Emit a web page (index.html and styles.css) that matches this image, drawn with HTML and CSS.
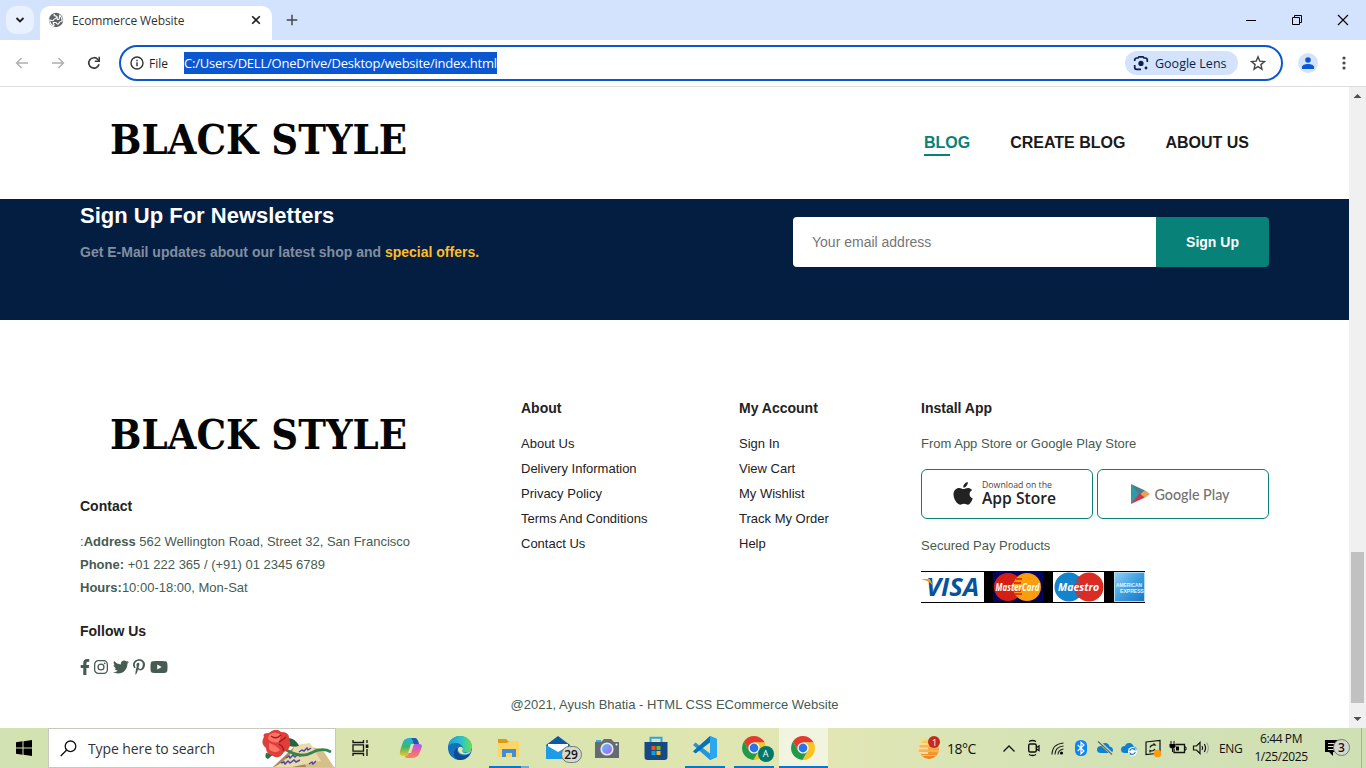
FILE: index.html
```html
<!DOCTYPE html>
<html lang="en">
<head>
<meta charset="utf-8">
<title>Ecommerce Website</title>
<link rel="stylesheet" href="styles.css">
</head>
<body>
<svg class="defs" width="0" height="0">
  <defs>
    <linearGradient id="edgeA" x1="0" y1="0" x2="1" y2="0"><stop offset="0" stop-color="#1b9de2"/><stop offset=".55" stop-color="#2bc3c8"/><stop offset="1" stop-color="#6be04f"/></linearGradient>
    <linearGradient id="copA" x1="0" y1="0" x2="0" y2="1"><stop offset="0" stop-color="#18b6e8"/><stop offset=".5" stop-color="#3fb56a"/><stop offset="1" stop-color="#f4c626"/></linearGradient>
    <linearGradient id="copB" x1="0" y1="0" x2="0" y2="1"><stop offset="0" stop-color="#a45cf0"/><stop offset=".5" stop-color="#f0609a"/><stop offset="1" stop-color="#f98a50"/></linearGradient>
    <linearGradient id="amex" x1="0" y1="0" x2="1" y2="1"><stop offset="0" stop-color="#8fd0f4"/><stop offset=".5" stop-color="#3d9ee0"/><stop offset="1" stop-color="#1a78c4"/></linearGradient>
    <linearGradient id="sun" x1="0" y1="0" x2="0" y2="1"><stop offset="0" stop-color="#ffd66b"/><stop offset="1" stop-color="#f07d14"/></linearGradient>
    <linearGradient id="lens" x1="0" y1="0" x2="1" y2="1"><stop offset="0" stop-color="#56c7f5"/><stop offset="1" stop-color="#b45af2"/></linearGradient>
    <g id="chrome">
      <path fill="#e33b2e" d="M12 6.5H22.66A12 12 0 0 0 1.9 5.52L7.24 14.75L12 12Z"/>
      <path fill="#fcc31e" d="M12 6.5H22.66A12 12 0 0 0 1.9 5.52L7.24 14.75L12 12Z" transform="rotate(120 12 12)"/>
      <path fill="#229a48" d="M12 6.5H22.66A12 12 0 0 0 1.9 5.52L7.24 14.75L12 12Z" transform="rotate(240 12 12)"/>
      <circle cx="12" cy="12" r="5.6" fill="#fff"/><circle cx="12" cy="12" r="4.4" fill="#2a74e8"/>
    </g>
  </defs>
</svg>

<div class="screen">
  <div class="tabstrip">
    <div class="tab-search"><svg width="10" height="10" viewBox="0 0 10 10"><path d="M1.5 3l3.5 3.5L8.500 3" fill="none" stroke="#1f1f1f" stroke-width="1.8"/></svg></div>
    <div class="tab">
      <svg width="16" height="16" viewBox="0 0 16 16"><circle cx="8" cy="8" r="7.200" fill="#5f6368"/><path d="M6.500 1.800C5 3.500 7 4 8.500 4.200C10 5 8 6.500 6.500 7C5 7.200 6 8.500 4.800 8.700L1.700 8C1.600 11 3.500 13 5.800 13.900C6.800 12 4.800 11.500 5.200 10.500H7.500C9 10.500 8.600 12 10 12.200C11.300 12 11 9.500 12.800 9.500L14.200 9C14.500 6 13 4.500 11.800 3.200C11 5 12 6.500 10.800 7.400C9 7.600 8.500 7.200 9.800 5.500" fill="none" stroke="#fff" stroke-width="1.100"/></svg>
      <span class="tab-title">Ecommerce Website</span>
      <svg class="tab-x" width="10" height="10" viewBox="0 0 10 10"><path d="M1.200 1.200l7.600 7.600M8.800 1.200l-7.600 7.600" stroke="#1f1f1f" stroke-width="1.600"/></svg>
    </div>
    <svg class="newtab" width="12" height="12" viewBox="0 0 12 12"><path d="M6 .7v10.600M.7 6h10.600" stroke="#474747" stroke-width="1.500"/></svg>
    <div class="win-controls">
      <svg width="46" height="40"><path d="M18 20.500h10" stroke="#000"/></svg>
      <svg width="46" height="40"><path d="M18.500 17.500h7v7h-7zM20.500 17.500v-2h7v7h-2" fill="none" stroke="#000"/></svg>
      <svg width="46" height="40"><path d="M18 15l10 10M28 15l-10 10" stroke="#000" stroke-width="1.100"/></svg>
    </div>
  </div>

  <div class="toolbar">
    <div class="nav-icons">
      <svg width="14" height="12" viewBox="0 0 14 12"><path d="M13 6H1.800M6.600 1L1.600 6l5 5" fill="none" stroke="#b0b0b0" stroke-width="1.500"/></svg>
      <svg width="14" height="12" viewBox="0 0 14 12"><path d="M1 6h11.200M7.400 1l5 5-5 5" fill="none" stroke="#b0b0b0" stroke-width="1.500"/></svg>
      <svg width="14" height="14" viewBox="0 0 14 14"><path d="M12 8.300A5.200 5.200 0 1 1 10.900 3.500L12.300 5" fill="none" stroke="#3c3c3c" stroke-width="1.700"/><path d="M13 .8V6H7.800V4.500h3.700V.8z" fill="#3c3c3c"/></svg>
    </div>
    <div class="omnibox">
      <svg width="14" height="14" viewBox="0 0 14 14"><circle cx="7" cy="7" r="6" fill="none" stroke="#333" stroke-width="1.400"/><path d="M7 6.200v4M7 3.700v1.500" stroke="#333" stroke-width="1.400"/></svg>
      <span class="file-label">File</span>
      <span class="url">C:/Users/DELL/OneDrive/Desktop/website/index.html</span>
      <div class="lens-chip">
        <svg width="16" height="16" viewBox="0 0 16 16"><path d="M1.700 6V5A2 2 0 0 1 3.700 3H5L6 1.800H10L11 3h1.300a2 2 0 0 1 2 2V7M1.700 10v2.300a2 2 0 0 0 2 2H8" fill="none" stroke="#0b1f4a" stroke-width="1.700"/><circle cx="8" cy="8.400" r="2.600" fill="#0b1f4a"/><circle cx="13" cy="13" r="1.400" fill="#0b1f4a"/></svg>
        <span>Google Lens</span>
      </div>
      <svg class="star" width="16" height="16" viewBox="0 0 16 16"><path d="M8 1.800l1.800 4.300 4.700.4-3.600 3.100 1.100 4.600L8 11.700l-4 2.500 1.100-4.600L1.500 6.500l4.700-.4z" fill="none" stroke="#474747" stroke-width="1.400"/></svg>
    </div>
    <div class="avatar"><svg width="12" height="12" viewBox="0 0 12 12"><circle cx="6" cy="3" r="2.800" fill="#0b57d0"/><path d="M0 12V10C0 8 3 7 6 7s6 1 6 3v2z" fill="#0b57d0"/></svg></div>
    <svg class="menu-dots" width="4" height="16"><circle cx="2" cy="3" r="1.600" fill="#474747"/><circle cx="2" cy="8" r="1.600" fill="#474747"/><circle cx="2" cy="13" r="1.600" fill="#474747"/></svg>
  </div>

  <div class="viewport">
    <div class="page">
      <header class="site-header">
        <svg class="logo" width="357" height="60"><text x="30" y="43" textLength="297" lengthAdjust="spacingAndGlyphs">BLACK STYLE</text></svg>
        <nav class="site-nav"><a class="active">BLOG</a><a>CREATE BLOG</a><a>ABOUT US</a></nav>
      </header>
      <section class="newsletter">
        <div>
          <h4>Sign Up For Newsletters</h4>
          <p>Get E-Mail updates about our latest shop and <span>special offers.</span></p>
        </div>
        <div class="form"><div class="email">Your email address</div><div class="signup">Sign Up</div></div>
      </section>
      <footer class="footer">
        <div class="col col-contact">
          <svg class="logo" width="357" height="78"><text x="30" y="53" textLength="297" lengthAdjust="spacingAndGlyphs">BLACK STYLE</text></svg>
          <h4 class="contact-h">Contact</h4>
          <div class="lines">
            <p>:<b>Address</b> 562 Wellington Road, Street 32, San Francisco</p>
            <p><b>Phone:</b> +01 222 365 / (+91) 01 2345 6789</p>
            <p><b>Hours:</b>10:00-18:00, Mon-Sat</p>
          </div>
          <h4 class="follow-h">Follow Us</h4>
          <div class="social">
            <svg width="10" height="16" viewBox="0 0 320 512"><path d="M279.140 288l14.220-92.660h-88.910v-60.130c0-25.350 12.420-50.060 52.240-50.060h40.420V6.260S260.430 0 225.360 0c-73.220 0-121.080 44.380-121.080 124.720v70.620H22.890V288h81.390v224h100.170V288z"/></svg>
            <svg width="14" height="16" viewBox="0 0 14 16"><rect x=".65" y="1.650" width="12.700" height="12.700" rx="3.600" fill="none" stroke="#465b52" stroke-width="1.300"/><circle cx="7" cy="8" r="2.950" fill="none" stroke="#465b52" stroke-width="1.300"/><circle cx="10.700" cy="4.300" r=".85"/></svg>
            <svg width="16" height="16" viewBox="0 0 512 512"><path d="M459.370 151.716c.325 4.548.325 9.097.325 13.645 0 138.720-105.583 298.558-298.558 298.558-59.452 0-114.680-17.219-161.137-47.106 8.447.974 16.568 1.299 25.340 1.299 49.055 0 94.213-16.568 130.274-44.832-46.132-.975-84.792-31.188-98.112-72.772 6.498.974 12.995 1.624 19.818 1.624 9.421 0 18.843-1.300 27.614-3.573-48.081-9.747-84.143-51.980-84.143-102.985v-1.299c13.969 7.797 30.214 12.670 47.431 13.319-28.264-18.843-46.781-51.005-46.781-87.391 0-19.492 5.197-37.360 14.294-52.954 51.655 63.675 129.300 105.258 216.365 109.807-1.624-7.797-2.599-15.918-2.599-24.040 0-57.828 46.782-104.934 104.934-104.934 30.213 0 57.502 12.670 76.670 33.137 23.715-4.548 46.456-13.320 66.599-25.340-7.798 24.366-24.366 44.833-46.132 57.827 21.117-2.273 41.584-8.122 60.426-16.243-14.292 20.791-32.161 39.308-52.628 54.253z"/></svg>
            <svg width="12" height="16" viewBox="0 0 384 512"><path d="M204 6.500C101.400 6.500 0 74.900 0 185.600 0 256 39.600 296 63.600 296c9.900 0 15.600-27.600 15.600-35.400 0-9.300-23.700-29.100-23.700-67.800 0-80.400 61.200-137.400 140.400-137.400 68.100 0 118.500 38.700 118.500 109.800 0 53.100-21.300 152.700-90.300 152.700-24.900 0-46.200-18-46.200-43.800 0-37.800 26.400-74.400 26.400-113.400 0-66.200-93.900-54.200-93.900 25.800 0 16.800 2.100 35.400 9.600 50.700-13.800 59.400-42 147.900-42 209.100 0 18.900 2.700 37.500 4.500 56.400 3.400 3.800 1.700 3.400 6.900 1.500 50.400-69 48.600-82.500 71.400-172.800 12.300 23.400 44.100 36 69.300 36 106.200 0 153.900-103.500 153.900-196.800C384 71.300 298.200 6.500 204 6.500z"/></svg>
            <svg width="18" height="16" viewBox="0 0 576 512"><path d="M549.655 124.083c-6.281-23.650-24.787-42.276-48.284-48.597C458.781 64 288 64 288 64S117.220 64 74.629 75.486c-23.497 6.322-42.003 24.947-48.284 48.597-11.412 42.867-11.412 132.305-11.412 132.305s0 89.438 11.412 132.305c6.281 23.650 24.787 41.500 48.284 47.821C117.220 448 288 448 288 448s170.780 0 213.371-11.486c23.497-6.321 42.003-24.171 48.284-47.821 11.412-42.867 11.412-132.305 11.412-132.305s0-89.438-11.412-132.305zm-317.510 213.508V175.185l142.739 81.205-142.739 81.201z"/></svg>
          </div>
        </div>
        <div class="col col-about">
          <h4>About</h4>
          <div class="links"><a>About Us</a><a>Delivery Information</a><a>Privacy Policy</a><a>Terms And Conditions</a><a>Contact Us</a></div>
        </div>
        <div class="col col-account">
          <h4>My Account</h4>
          <div class="links"><a>Sign In</a><a>View Cart</a><a>My Wishlist</a><a>Track My Order</a><a>Help</a></div>
        </div>
        <div class="col col-install">
          <h4>Install App</h4>
          <p class="row-text">From App Store or Google Play Store</p>
          <div class="stores">
            <div class="store"><svg width="170" height="48" viewBox="0 0 170 48">
              <path transform="translate(31.500 12)" d="M14.300 0C14.500 1.600 13.700 3 12.900 3.900C12 5 10.900 5.500 9.800 5.400C9.600 3.900 10.400 2.500 11.200 1.700C12.100.7 13.300.1 14.300 0ZM18.500 8.200C16.900 9.100 16 10.500 16.100 12.300C16.200 14.300 17.300 15.800 19.200 16.600C18.400 18.900 16.600 22.500 14.500 22.700C13 22.700 12.400 21.800 10.500 21.800C8.700 21.800 8 22.700 6.600 22.700C3.400 22.500 0 16.600 0 12.500C0 8.300 2.800 6 5.600 6C7.500 6 8.900 7.100 10 7.100C11.100 7.100 12.800 5.900 14.900 6C16.400 6.100 17.700 6.900 18.500 8.200Z" fill="#222"/>
              <text class="st-small" x="60" y="18" textLength="70" lengthAdjust="spacingAndGlyphs">Download on the</text>
              <text class="st-big" x="60" y="34" textLength="74" lengthAdjust="spacingAndGlyphs">App Store</text></svg></div>
            <div class="store"><svg width="170" height="48" viewBox="0 0 170 48">
              <path d="M33 14L44 24L33 34Z" fill="#319aa8"/><path d="M33 14L47 20.500L42 25.500Z" fill="#467f91"/><path d="M33 34L47 27.500L42 22.500Z" fill="#c9394e"/><path d="M47 20.300L52 24L47 27.700L42.500 24Z" fill="#e6a25b"/>
              <text class="st-google" x="56.500" y="30" textLength="75" lengthAdjust="spacingAndGlyphs">Google Play</text></svg></div>
          </div>
          <p class="row-text">Secured Pay Products</p>
          <svg class="pay" width="224" height="32" viewBox="0 0 224 32">
            <rect width="224" height="32" fill="#000"/>
            <rect y="1" width="63" height="30" fill="#fff"/>
            <text class="visa" x="5" y="25" textLength="53" lengthAdjust="spacingAndGlyphs">VISA</text><path d="M1 8h8l3 7C9 11 5 9 1 8.500z" fill="#f0a020"/>
            <rect x="72" y="1" width="50" height="30" fill="#03045c"/>
            <circle cx="87" cy="16" r="14" fill="#d61f14"/><circle cx="106" cy="16" r="14" fill="#fb9d0c"/>
            <path d="M95 8h6M93 12h7M93 20h7M94 23h7" stroke="#d61f14" stroke-width="1.300"/>
            <text class="card" x="74.500" y="20" textLength="44" lengthAdjust="spacingAndGlyphs">MasterCard</text>
            <rect x="132" y="1" width="51" height="30" fill="#fff"/>
            <circle cx="148" cy="16" r="14.500" fill="#1384cc"/><circle cx="168" cy="16" r="14.500" fill="#da2b24"/><path d="M158 5.500a14.500 14.500 0 0 0 0 21" fill="#da2b24"/><path d="M155 9h4M154 12h5M154 20h5M155 23h5" stroke="#1384cc" stroke-width="1.200"/>
            <text class="card" x="137" y="19.500" textLength="41" lengthAdjust="spacingAndGlyphs">Maestro</text>
            <rect x="193" y="1" width="31" height="30" fill="#b5ddf5"/><rect x="194" y="2" width="29" height="28" fill="url(#amex)"/>
            <text class="amex" x="195" y="16" textLength="26" lengthAdjust="spacingAndGlyphs">AMERICAN</text><text class="amex" x="199" y="22" textLength="24" lengthAdjust="spacingAndGlyphs">EXPRESS</text>
          </svg>
        </div>
      </footer>
      <p class="copyright">@2021, Ayush Bhatia - HTML CSS ECommerce Website</p>
    </div>
    <div class="scrollbar">
      <svg width="17" height="17"><path d="M4.500 11h8L8.500 7z" fill="#505050"/></svg>
      <div class="thumb"></div>
      <svg width="17" height="17"><path d="M4.500 6h8L8.500 10z" fill="#505050"/></svg>
    </div>
  </div>

  <div class="taskbar">
    <div class="start"><svg width="16" height="16" viewBox="0 0 16 16"><path d="M0 2.200L6.500 1.300V7.500H0zM7.500 1.200L16 0V7.500H7.500zM0 8.500H6.500V14.700L0 13.800zM7.500 8.500H16V16L7.500 14.800z"/></svg></div>
    <div class="search">
      <svg width="17" height="17" viewBox="0 0 17 17"><circle cx="10.500" cy="6.300" r="5.300" fill="none" stroke="#111" stroke-width="1.300"/><path d="M6.700 10L.7 16" stroke="#111" stroke-width="1.300"/></svg>
      <span>Type here to search</span>
      <svg class="rose" width="74" height="37" viewBox="0 0 74 37">
        <path d="M12 37L36 14L52 22L72 37Z" fill="#a98a5e"/><path d="M38 15L61 19L73 37H45Z" fill="#d5c08c"/><path d="M34 15L49 13L60 31L31 37H13Q29 29 34 15Z" fill="#eadbad"/>
        <path d="M25 28l3-2 1 2 3-3 2 2 3-3 2 2 3-2M20 33l3-1 1 2 3-3 2 2 4-3 2 2 4-2M38 22l3-2 2 1 3-3 1 2 3-2M48 34l3-2 1 2 3-3" fill="none" stroke="#5146a0" stroke-width="1.500"/>
        <path d="M22 18Q39 29 50 23T70 22" fill="none" stroke="#34854a" stroke-width="2.700"/><path d="M25 8Q34 7 38 16Q29 18 24 14Z" fill="#27643e"/><path d="M5 23l8 1-6 5Q3 28 5 23z" fill="#26734a"/>
        <path d="M3 7Q1 3 8 3Q15-3 20 2Q29 2 28 9Q32 18 23 22Q18 30 12 26Q5 24 5 18Q-1 13 3 7Z" fill="#df3f3b"/><path d="M8 5Q14 0 20 5L18 12Q12 14 7 9ZM8 13Q15 15 19 20Q13 25 8 19Z" fill="#ff7469"/><path d="M10 6Q15 10 20 5M18 12Q22 10 25 7M18 14Q24 18 22 21" fill="none" stroke="#a91825" stroke-width="1.500"/>
      </svg>
    </div>
    <div class="taskview"><svg width="17" height="16" viewBox="0 0 17 16"><path d="M1 0v2.500h10.500V0M1 16v-2.500h10.500V16M1 4.800h10.500v6.400H1zM15 0v3M15 9v7" fill="none" stroke="#111" stroke-width="1.300"/><rect x="13.700" y="4.500" width="2.700" height="3.500" fill="#111"/></svg></div>
    <div class="apps">
      <div class="app"><svg width="24" height="24" viewBox="0 0 24 24"><path d="M7 3Q8 2 10 2H16Q18 2 19 5L20 8H15Q13 8 12 11L10 17Q9 20 6 20H4Q0 20 1 15L4 6Q5 3 7 3Z" fill="url(#copA)"/><path d="M12 2h4q2 0 3 3l1 3h-4q-2 0-2-3z" fill="#2454b8"/><path d="M17 21Q16 22 14 22H8Q6 22 6 20Q9 20 10 17L13 10Q14 8 16 8H20Q24 8 22.500 12L20 18Q19 21 17 21Z" fill="url(#copB)"/><path d="M12 8h3l-3 9H9z" fill="#dce6ae"/></svg></div>
      <div class="app"><svg width="24" height="24" viewBox="0 0 24 24"><circle cx="12" cy="12" r="12" fill="#1470bd"/><path d="M.3 10C1 3 7 0 12 0C19 0 24 5 24 10.500C24 15 20 17 16.500 16.500C13.500 16 14.500 14.500 15 12.500C15 9 11 7 7.500 7Q2.500 7 .3 10Z" fill="url(#edgeA)"/><path d="M9.500 12C7.500 19 15 22 22.300 17.500C20 22 16 24 11.500 24C4 23 5 13 9.500 12Z" fill="#0d4a94"/><path d="M11 11Q14.500 10 15 13Q13 16 16.500 17Q20 18 23.500 14Q22 18 18 18.500Q11 19 9.800 14Q9.800 12 11 11Z" fill="#dce6ae"/></svg></div>
      <div class="app open2"><svg width="24" height="24" viewBox="0 0 24 24"><path d="M1 3h8l2 2h11v5H1z" fill="#d99a16"/><path d="M1 7h9l2-2h10v16H1z" fill="#ffd466"/><path d="M5 13h14v8h-4v-4H9v4H5z" fill="#3e8fd6"/></svg></div>
      <div class="app"><svg width="24" height="24" viewBox="0 0 24 24"><path d="M0 9L12 0L24 9V23H0z" fill="#0c5aa6"/><path d="M2 8h20v8H2z" fill="#fff"/><path d="M0 9l12 7 12-7v14H0z" fill="#1e9be6"/></svg><span class="badge">29</span></div>
      <div class="app"><svg width="24" height="24" viewBox="0 0 24 24"><rect x="1" y="4" width="5" height="3" fill="#34aee8"/><path d="M0 6h6l3-3h7l3 3h5v16H0z" fill="#656b73"/><circle cx="12" cy="13" r="6.600" fill="#e5e8ee"/><circle cx="12" cy="13" r="5" fill="url(#lens)"/><circle cx="21.500" cy="8.500" r="1" fill="#fff"/></svg></div>
      <div class="app"><svg width="24" height="24" viewBox="0 0 24 24"><path d="M6.500 7V1.700H17.500V7" fill="none" stroke="#2aa7e8" stroke-width="2"/><path d="M.5 6H23.500V21Q23.500 24 20.500 24H3.500Q.5 24 .5 21z" fill="#174a84"/><path d="M7.500 10h4v4h-4z" fill="#f25022"/><path d="M12.500 10h4v4h-4z" fill="#7fba00"/><path d="M7.500 15h4v4h-4z" fill="#00a4ef"/><path d="M12.500 15h4v4h-4z" fill="#ffb900"/></svg></div>
      <div class="app open"><svg width="24" height="24" viewBox="0 0 24 24"><path d="M17 0L24 3V21L17 24L0 9L2.500 6.500L17 17.500Z" fill="#2196dd"/><path d="M17 0V6.500L2.500 17.500L0 15.200Z" fill="#0871b8"/><path d="M17 0L24 3V21L17 24Z" fill="#2aa7ee"/></svg></div>
      <div class="app open"><svg width="24" height="24" viewBox="0 0 24 24"><use href="#chrome"/></svg><span class="profile">A</span></div>
      <div class="app active"><svg width="24" height="24" viewBox="0 0 24 24"><use href="#chrome"/></svg></div>
    </div>
    <div class="weather">
      <svg width="24" height="24" viewBox="0 0 24 24"><path d="M4 5h11M2 9h12" stroke="#ffd879" stroke-width="2"/><circle cx="13" cy="13" r="10" fill="url(#sun)"/><path d="M2 8h12M0 12.500h12M3 17h9" stroke="#f9dda0" stroke-width="1.800"/><path d="M2 15h20M5 19.500h15" stroke="#fbc178" stroke-width="1.200"/><circle cx="18" cy="6" r="6" fill="#c42b1c"/><text class="wbadge" x="16" y="9.500">1</text></svg>
      <span>18°C</span>
    </div>
    <div class="tray">
      <svg width="24" height="24"><path d="M6.500 15.500L12 10l5.500 5.500" fill="none" stroke="#111" stroke-width="1.300"/></svg>
      <svg width="24" height="24"><rect x="7.700" y="8" width="7.600" height="8" rx="1.500" fill="none" stroke="#111" stroke-width="1.400"/><path d="M15.500 11.500l2.500-1.500v4.500l-2.500-1.500M8 5.500Q11.500 3.500 15 5.500M8 18.500q3.500 2 7 0" fill="none" stroke="#111" stroke-width="1.300"/></svg>
      <svg width="24" height="24"><g fill="none" stroke="#222" stroke-width="1.100"><path d="M7 18.500Q7 8 18.500 7M10 18.500Q10 11 18.500 10M13 18.500Q13 14 18.500 13"/></g><circle cx="16.500" cy="17" r="1.600"/></svg>
      <svg width="24" height="24"><rect x="6" y="4" width="12" height="16" rx="5.500" fill="#0a84ff"/><path d="M8.700 9l6.300 6-3 2.800V6.200L15 9l-6.300 6" fill="none" stroke="#fff" stroke-width="1.200"/></svg>
      <svg width="24" height="24"><path d="M8 17Q4 17 4 13.500T8 10Q9 6.500 13 7q3 .5 3.500 3.500Q20 11 20 14q0 3-3 3z" fill="#0f80d4"/><path d="M6 6l13 12" stroke="#dce6ae" stroke-width="3"/><path d="M5 5.500l14 13" stroke="#666" stroke-width="1.200"/></svg>
      <svg width="24" height="24"><path d="M8 17Q4 17 4 13.500T8 10Q9 6.500 13 7q3 .5 3.500 3.500Q20 11 20 14q0 3-3 3z" fill="#0f80d4"/><circle cx="15.500" cy="15.500" r="4.500" fill="#fff"/><path d="M12.800 15a2.800 2.800 0 0 1 5-1.300v-1.500M18.200 16a2.800 2.800 0 0 1-5 1.300v1.500" fill="none" stroke="#1472c4" stroke-width="1.100"/></svg>
      <svg width="24" height="24"><path d="M5 6l14-1.500V17L5 18.500z" fill="none" stroke="#111" stroke-width="1.200"/><path d="M9 11.500q1-3 5-2.500l-1.500-1.500M14 13q-2 3-5 1.500v2" fill="none" stroke="#111" stroke-width="1.200"/><circle cx="16.500" cy="17.500" r="3.800" fill="#ff9b0b"/></svg>
      <svg width="24" height="24"><path d="M10.500 8.500h9v8H9v-4" fill="none" stroke="#111" stroke-width="1.300"/><path d="M19.500 11h1.500v3h-1.500M6 5v3M9 5v3" fill="none" stroke="#111"/><path d="M4.500 8h6v3q-3 3-6 0zM11 10.500h3v4h-3z"/><path d="M7.500 12v4" stroke="#111"/></svg>
      <svg width="24" height="24"><path d="M4.500 10h3l3.500-3.500v11L7.500 14h-3z" fill="none" stroke="#111" stroke-width="1.200"/><path d="M13 10q1.300 2 0 4M15.300 8q2.500 4 0 8" fill="none" stroke="#111" stroke-width="1.200"/><path d="M17.600 6.500q3.500 5.500 0 11" fill="none" stroke="#999"/></svg>
    </div>
    <span class="lang">ENG</span>
    <div class="clock"><span>6:44 PM</span><span>1/25/2025</span></div>
    <div class="notif"><svg width="16" height="16" viewBox="0 0 16 16"><path d="M0 0h16v12h-8v4l-4-4H0z"/><path d="M3 3.500h10M3 6.500h10M3 9.500h6" stroke="#dce6be"/></svg><span class="badge">3</span></div>
    <div class="show-desktop"></div>
  </div>
</div>
</body>
</html>
```

FILE: styles.css
```css
* { box-sizing: border-box; margin: 0; padding: 0; }
body { width: 1366px; height: 768px; overflow: hidden; background: #fff; font-family: "Liberation Sans", Arial, sans-serif; }
svg { display: block; flex: none; }
.defs { position: absolute; }
.screen { display: flex; flex-direction: column; width: 1366px; height: 768px; }

/* browser chrome */
.tabstrip { display: flex; align-items: center; height: 40px; background: #d3e3fd; font-family: "Open Sans", sans-serif; }
.tab-search { display: flex; align-items: center; justify-content: center; width: 28px; height: 28px; margin-left: 6px; border-radius: 10px; background: #e9f1fe; }
.tab { display: flex; align-items: center; align-self: flex-end; width: 232px; height: 34px; margin-left: 6px; padding: 0 11px 6px 8px; border-radius: 10px 10px 0 0; background: #fff; }
.tab-title { margin-left: 8px; font-size: 12px; letter-spacing: -0.1px; color: #333; white-space: nowrap; }
.tab-x { margin-left: auto; }
.newtab { margin-left: 14px; }
.win-controls { display: flex; margin-left: auto; }
.toolbar { display: flex; align-items: center; height: 47px; padding-top: 0; border-bottom: 1px solid #dedede; background: #fff; font-family: "Open Sans", sans-serif; }
.nav-icons { display: flex; align-items: center; gap: 22px; width: 119px; padding-left: 15px; }
.omnibox { display: flex; align-items: center; width: 1164px; height: 36px; padding: 0 16px 0 9px; border: 2px solid #0b57d0; border-radius: 18px; }
.file-label { width: 35px; margin-left: 5px; font-size: 12px; color: #1f1f1f; }
.url { height: 22px; line-height: 22px; background: #0b57d0; color: #fff; font-size: 13px; letter-spacing: -0.22px; white-space: nowrap; }
.lens-chip { display: flex; align-items: center; gap: 6px; width: 113px; height: 24px; margin-left: auto; padding-left: 8px; border-radius: 12px; background: #d3e3fd; color: #0b1f4a; font-size: 12.5px; white-space: nowrap; }
.star { margin-left: 12px; margin-right: -1px; }
.avatar { display: flex; align-items: center; justify-content: center; width: 20px; height: 20px; margin-left: 15px; border-radius: 50%; background: #d3e3fd; }
.menu-dots { margin-left: 24px; }

/* page */
.viewport { display: flex; height: 641px; }
.page { width: 1349px; height: 641px; background: #fff; }
.logo text { font-family: "DejaVu Serif Condensed", "DejaVu Serif", serif; font-weight: bold; font-size: 41px; fill: #050505; }
.site-header { display: flex; align-items: center; justify-content: space-between; height: 112px; padding: 0 100px 0 80px; }
.site-header .logo { margin-bottom: 4px; }
.site-nav { display: flex; gap: 40px; }
.site-nav a { display: block; padding-bottom: 3px; margin-top: 3px; font-size: 16px; line-height: 20px; font-weight: bold; color: #1a1a1a; white-space: nowrap; }
.site-nav .active { color: #088178; }
.site-nav .active::after { content: ""; display: block; width: 26px; height: 2px; margin-top: 1px; margin-bottom: -3px; background: #088178; }
.newsletter { display: flex; justify-content: space-between; height: 121px; padding: 0 80px; background: #041e42; }
.newsletter h4 { height: 33px; line-height: 33px; font-size: 22px; color: #fff; white-space: nowrap; }
.newsletter p { margin-top: 8px; font-size: 14px; line-height: 25px; font-weight: bold; color: #818ea0; white-space: nowrap; }
.newsletter p span { color: #ffbd27; }
.form { display: flex; width: 476px; height: 50px; margin-top: 18px; border-radius: 4px; overflow: hidden; font-size: 14px; line-height: 50px; }
.email { width: 363px; padding-left: 19px; background: #fff; color: #757575; }
.signup { flex: 1; background: #088178; color: #fff; font-weight: bold; text-align: center; }
.footer { display: flex; height: 372px; padding: 76px 80px 0; font-size: 13px; color: #465b52; }
.footer h4 { font-size: 14px; line-height: 24px; color: #222; white-space: nowrap; }
.footer p { white-space: nowrap; }
.col-contact { width: 441px; }
.contact-h, .follow-h { margin-top: 20px; }
.lines { margin-top: 12px; line-height: 23px; }
.social { display: flex; gap: 4.400px; margin-top: 16px; fill: #465b52; }
.col-about { width: 218px; }
.col-account { width: 182px; }
.links { display: flex; flex-direction: column; margin-top: 11px; }
.links a { line-height: 25px; color: #222; }
.row-text { margin-top: 11px; line-height: 25px; }
.stores { display: flex; gap: 4px; margin-top: 13px; }
.store { width: 172px; height: 50px; border: 1px solid #088178; border-radius: 6px; }
.stores + .row-text { margin-top: 14px; }
.pay { margin-top: 13px; }
.st-small { font: 9px "Open Sans", sans-serif; fill: #444; }
.st-big { font: 600 16px "Open Sans", sans-serif; fill: #222; }
.st-google { font: 500 16px Lato, sans-serif; fill: #737373; }
.visa { font: italic bold 25px "Open Sans", sans-serif; fill: #07529c; }
.card { font: italic bold 11px "Open Sans", sans-serif; fill: #fff; }
.amex { font: bold 6px "Liberation Sans", sans-serif; fill: #e4f4ff; }
.copyright { font-size: 13px; line-height: 25px; text-align: center; color: #465b52; }
.scrollbar { display: flex; flex-direction: column; width: 17px; height: 641px; background: #f0f0f0; }
.thumb { width: 13px; height: 151px; margin: 448px 2px 8px; background: #c1c1c1; }

/* taskbar */
.taskbar { display: flex; align-items: center; height: 40px; background: linear-gradient(90deg, #d3e2b2, #dce5ae 45%, #e2e6b4 60%, #d5e3b6 75%, #cfe0b4); font-family: "Open Sans", sans-serif; color: #111; }
.start { width: 48px; padding-left: 16px; }
.search { display: flex; align-items: center; width: 288px; height: 40px; padding-left: 11px; border: 1px solid #c6c9c0; background: #fff; font-size: 14px; color: #333; white-space: nowrap; }
.search span { width: 163px; margin-left: 11px; letter-spacing: -0.1px; }
.rose { margin-left: 10px; align-self: flex-end; }
.taskview { width: 50.500px; padding-left: 16px; }
.apps { display: flex; height: 40px; }
.app { position: relative; display: flex; align-items: center; justify-content: center; width: 49px; height: 40px; }
.open { background: linear-gradient(#0078d7, #0078d7) center bottom / 40px 2px no-repeat; }
.open2 { background: linear-gradient(90deg, #0078d7 80%, #70aadd 80%) center bottom / 40px 2px no-repeat; }
.app.active { border-bottom: 2px solid #0078d7; padding-top: 2px; background: #f1f4df; }
.badge { position: absolute; left: 27px; top: 18px; width: 21px; height: 17px; border: 1px solid #777; border-radius: 9px; background: #d5d9cd; font-size: 12px; line-height: 15px; font-weight: 600; text-align: center; }
.profile { position: absolute; left: 28px; top: 18px; width: 16px; height: 16px; border-radius: 50%; background: #00796b; color: #fff; font-size: 9px; line-height: 16px; text-align: center; }
.weather { display: flex; align-items: center; gap: 7px; width: 169.500px; padding-left: 88.500px; font-size: 14px; letter-spacing: -0.5px; }
.wbadge { font: 9px "Open Sans", sans-serif; fill: #fff; }
.tray { display: flex; }
.lang { width: 35px; padding-left: 6px; font-size: 12px; letter-spacing: -0.4px; }
.clock { display: flex; flex-direction: column; align-items: center; width: 66px; font-size: 12px; line-height: 18px; letter-spacing: -0.4px; }
.notif { position: relative; width: 47px; padding-left: 11px; }
.notif .badge { left: 19px; top: -1px; width: 17px; height: 17px; }
.show-desktop { width: 1px; height: 40px; background: #a9b596; }
```
